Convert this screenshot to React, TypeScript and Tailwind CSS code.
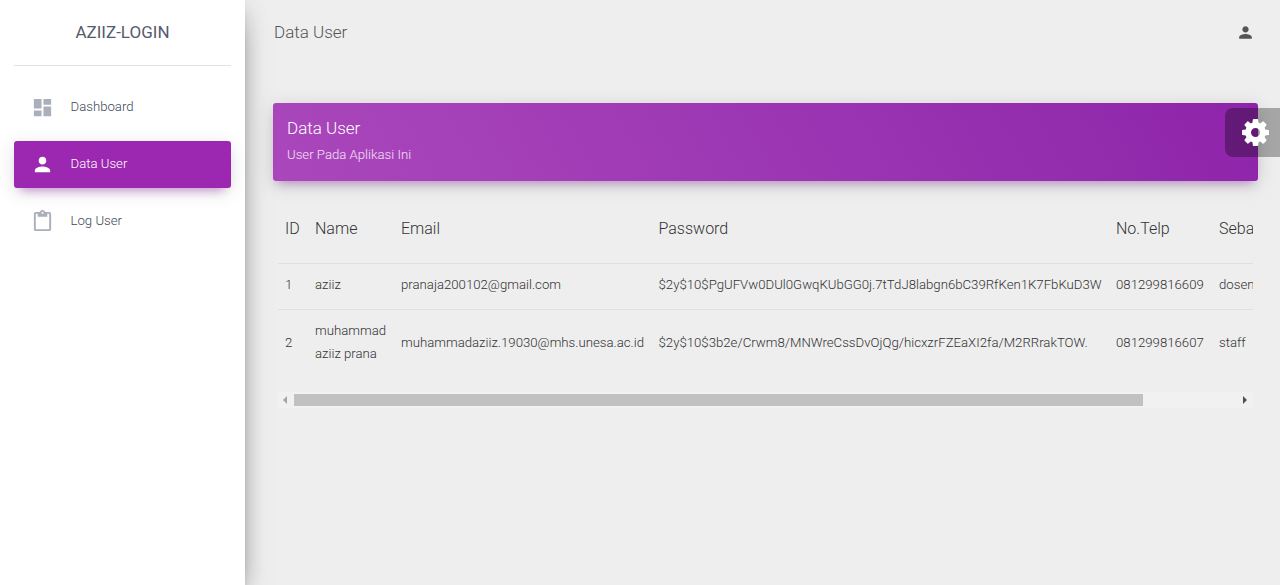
import type { ReactNode } from "react";
import { MdDashboard, MdPerson } from "react-icons/md";

type User = { id: string; name: ReactNode; email: string; password: string; phone: string; role: string };

const users: User[] = [
  {
    id: "1",
    name: "aziiz",
    email: "pranaja200102@gmail.com",
    password: "$2y$10$PgUFVw0DUl0GwqKUbGG0j.7tTdJ8labgn6bC39RfKen1K7FbKuD3W",
    phone: "081299816609",
    role: "dosen",
  },
  {
    id: "2",
    name: "muhammad aziiz prana",
    email: "muhammadaziiz.19030@mhs.unesa.ac.id",
    password: "$2y$10$3b2e/Crwm8/MNWreCssDvOjQg/hicxzrFZEaXI2fa/M2RRrakTOW.",
    phone: "081299816607",
    role: "staff",
  },
];

function ClipboardIcon() {
  return (
    <svg viewBox="0 0 24 24" className="size-[23px]" fill="currentColor">
      <path d="M19 2h-4.18C14.4.84 13.3 0 12 0S9.6.84 9.18 2H5c-1.1 0-2 .9-2 2v16c0 1.1.9 2 2 2h14c1.1 0 2-.9 2-2V4c0-1.1-.9-2-2-2zm-7 0c.55 0 1 .45 1 1s-.45 1-1 1-1-.45-1-1 .45-1 1-1zm7 18H5V4h2v3h10V4h2v16z" />
    </svg>
  );
}

function GearIcon() {
  return (
    <svg viewBox="0 128 1536 1536" className="size-[27px]" fill="currentColor">
      <path d="M1024 896q0-106-75-181t-181-75-181 75-75 181 75 181 181 75 181-75 75-181zm512-109v222q0 12-8 23t-20 13l-185 28q-19 54-39 91 35 50 107 138 10 12 10 25t-9 23q-27 37-99 108t-94 71q-12 0-26-9l-138-108q-44 23-91 38-16 136-29 186-7 28-36 28h-222q-14 0-24.5-8.5t-11.5-21.5l-28-184q-49-16-90-37l-141 107q-10 9-25 9-14 0-25-11-126-114-165-168-7-10-7-23 0-12 8-23 15-21 51-66.5t54-70.5q-27-50-41-99l-183-27q-13-2-21-12.5t-8-23.5v-222q0-12 8-23t19-13l186-28q14-46 39-92-40-57-107-138-10-12-10-24 0-10 9-23 26-36 98.5-107.5t94.5-71.5q13 0 26 10l138 107q44-23 91-38 16-136 29-186 7-28 36-28h222q14 0 24.5 8.5t11.5 21.5l28 184q49 16 90 37l142-107q9-9 24-9 13 0 25 10 129 119 165 170 7 8 7 22 0 12-8 23-15 21-51 66.5t-54 70.5q26 50 41 98l183 28q13 2 21 12.5t8 23.5z" />
    </svg>
  );
}

function NavItem({ icon, label, active }: { icon: ReactNode; label: string; active?: boolean }) {
  return (
    <a
      className={
        active
          ? "flex h-[47px] items-center rounded-[3px] bg-[#9c27b0] pl-[17px] text-white shadow-[0_11px_9px_-9px_rgba(156,39,176,0.28),0_4px_19px_0_rgba(0,0,0,0.12),0_7px_9px_-5px_rgba(156,39,176,0.2)]"
          : "flex h-[47px] items-center rounded-[3px] pl-[17px] text-[#3c4858]"
      }
    >
      <span className={active ? "flex w-[39.5px] text-white" : "flex w-[39.5px] text-[#a9afbb]"}>{icon}</span>
      <span className="pb-px text-[13.2px]">{label}</span>
    </a>
  );
}

export default function App() {
  return (
    <div className="flex h-[585px] w-full overflow-hidden bg-[#eeeeee] font-['Roboto',sans-serif] text-[13.2px] font-light text-[#333333]">
      <aside className="z-10 w-[245px] shrink-0 bg-white px-[14px] shadow-[0_15px_28px_-11px_rgba(0,0,0,0.56),0_4px_24px_0_rgba(0,0,0,0.12),0_8px_9px_-5px_rgba(0,0,0,0.2)]">
        <div className="flex h-[66px] items-center justify-center border-b border-[#e3e3e3] text-[17px] font-normal text-[#555b6b]">
          AZIIZ-LOGIN
        </div>
        <nav className="mt-[18px] flex flex-col gap-[10px]">
          <NavItem icon={<MdDashboard className="size-[23px]" />} label="Dashboard" />
          <NavItem icon={<MdPerson className="size-[23px]" />} label="Data User" active />
          <NavItem icon={<ClipboardIcon />} label="Log User" />
        </nav>
      </aside>

      <main className="min-w-0 flex-1 pr-[22.5px] pl-[28px]">
        <header className="flex h-[65px] items-center justify-between pr-[3px] pl-px">
          <span className="text-[17px] text-[#555555]">Data User</span>
          <MdPerson className="size-[19px] text-[#555555]" />
        </header>

        <section className="mt-[38px] flex h-[78px] flex-col rounded-[3px] bg-linear-60 from-[#ab47bc] to-[#8e24aa] pt-[12px] pl-[14px] text-white shadow-[0_4px_19px_0_rgba(0,0,0,0.14),0_7px_9px_-5px_rgba(156,39,176,0.4)]">
          <h4 className="text-[17px] leading-[26px] font-light">Data User</h4>
          <p className="text-[13.2px] leading-[27px] text-white/85">User Pada Aplikasi Ini</p>
        </section>

        <div className="mt-[14px] ml-[4.5px] w-[975.5px] overflow-hidden">
          <table className="w-[1120px] table-fixed border-collapse text-left">
            <colgroup>
              <col className="w-[30px]" />
              <col className="w-[86px]" />
              <col className="w-[257.5px]" />
              <col className="w-[457.5px]" />
              <col className="w-[103px]" />
              <col />
            </colgroup>
            <thead>
              <tr className="h-[68px] text-[16px] whitespace-nowrap">
                {["ID", "Name", "Email", "Password", "No.Telp", "Sebagai"].map((h) => (
                  <th key={h} className="px-[7.5px] font-light">
                    {h}
                  </th>
                ))}
              </tr>
            </thead>
            <tbody>
              {users.map((u) => (
                <tr key={u.id} className="border-t border-[#e0e0e0] leading-[22.6px]">
                  <td className="px-[7.5px] pt-[10.8px] pb-[11.8px]">{u.id}</td>
                  <td className="pt-[10.8px] pb-[11.8px] pl-[7.5px]">{u.name}</td>
                  <td className="px-[7.5px] pt-[10.8px] pb-[11.8px] whitespace-nowrap">{u.email}</td>
                  <td className="px-[7.5px] pt-[10.8px] pb-[11.8px] whitespace-nowrap">{u.password}</td>
                  <td className="px-[7.5px] pt-[10.8px] pb-[11.8px] whitespace-nowrap">{u.phone}</td>
                  <td className="px-[7.5px] pt-[10.8px] pb-[11.8px]">{u.role}</td>
                </tr>
              ))}
            </tbody>
          </table>
          <div className="mt-[15px] flex h-[16px] items-center bg-[#f1f1f1]">
            <div className="flex w-[16.5px] justify-end pr-[7px]">
              <svg viewBox="0 0 4 8" className="h-[8px] w-[4px] fill-[#a3a3a3]">
                <path d="M4 0v8L0 4z" />
              </svg>
            </div>
            <div className="h-[12px] w-[849px] bg-[#c1c1c1]" />
            <div className="flex flex-1 justify-end pr-[6px]">
              <svg viewBox="0 0 4 8" className="h-[8px] w-[4px] fill-[#505050]">
                <path d="M0 0v8l4-4z" />
              </svg>
            </div>
          </div>
        </div>
      </main>

      <button
        aria-label="Settings"
        className="fixed top-[108px] right-0 z-20 flex h-[49px] w-[55px] items-center rounded-l-[8px] bg-black/30 pl-[17px] text-white"
      >
        <GearIcon />
      </button>
    </div>
  );
}
